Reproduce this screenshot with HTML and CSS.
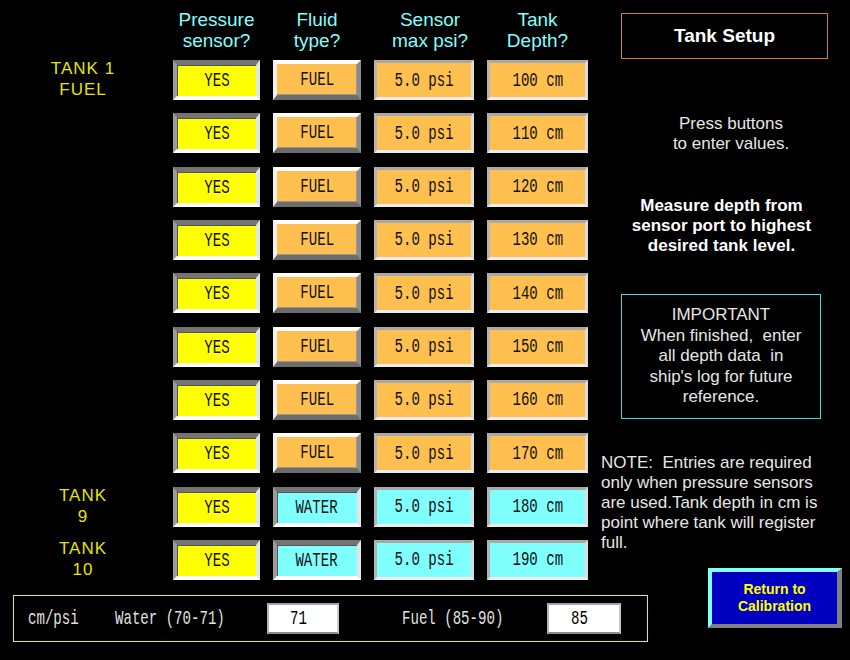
FILE: index.html
```html
<!DOCTYPE html>
<html lang="en">
<head>
    <meta charset="UTF-8">
    <title>Tank Setup</title>
    <link rel="stylesheet" href="styles.css">
</head>
<body>

    <div class="screen">

        <!-- Tank table -->
        <div class="tanks">
            <div class="heads">
                <div></div>
                <div>Pressure<br>sensor?</div>
                <div>Fluid<br>type?</div>
                <div class="head-psi">Sensor<br>max psi?</div>
                <div>Tank<br>Depth?</div>
            </div>

            <div class="rows">
                <div class="tank-name">TANK 1<br>FUEL</div>
                <div class="key sunk yes"><span class="lcd">YES</span></div>
                <div class="key raised fuel"><span class="lcd">FUEL</span></div>
                <div class="key flat fuel"><span class="lcd">5.0 psi</span></div>
                <div class="key flat fuel"><span class="lcd">100 cm</span></div>

                <div></div>
                <div class="key sunk yes"><span class="lcd">YES</span></div>
                <div class="key raised fuel"><span class="lcd">FUEL</span></div>
                <div class="key flat fuel"><span class="lcd">5.0 psi</span></div>
                <div class="key flat fuel"><span class="lcd">110 cm</span></div>

                <div></div>
                <div class="key sunk yes"><span class="lcd">YES</span></div>
                <div class="key raised fuel"><span class="lcd">FUEL</span></div>
                <div class="key flat fuel"><span class="lcd">5.0 psi</span></div>
                <div class="key flat fuel"><span class="lcd">120 cm</span></div>

                <div></div>
                <div class="key sunk yes"><span class="lcd">YES</span></div>
                <div class="key raised fuel"><span class="lcd">FUEL</span></div>
                <div class="key flat fuel"><span class="lcd">5.0 psi</span></div>
                <div class="key flat fuel"><span class="lcd">130 cm</span></div>

                <div></div>
                <div class="key sunk yes"><span class="lcd">YES</span></div>
                <div class="key raised fuel"><span class="lcd">FUEL</span></div>
                <div class="key flat fuel"><span class="lcd">5.0 psi</span></div>
                <div class="key flat fuel"><span class="lcd">140 cm</span></div>

                <div></div>
                <div class="key sunk yes"><span class="lcd">YES</span></div>
                <div class="key raised fuel"><span class="lcd">FUEL</span></div>
                <div class="key flat fuel"><span class="lcd">5.0 psi</span></div>
                <div class="key flat fuel"><span class="lcd">150 cm</span></div>

                <div></div>
                <div class="key sunk yes"><span class="lcd">YES</span></div>
                <div class="key raised fuel"><span class="lcd">FUEL</span></div>
                <div class="key flat fuel"><span class="lcd">5.0 psi</span></div>
                <div class="key flat fuel"><span class="lcd">160 cm</span></div>

                <div></div>
                <div class="key sunk yes"><span class="lcd">YES</span></div>
                <div class="key raised fuel"><span class="lcd">FUEL</span></div>
                <div class="key flat fuel"><span class="lcd">5.0 psi</span></div>
                <div class="key flat fuel"><span class="lcd">170 cm</span></div>

                <div class="tank-name">TANK<br>9</div>
                <div class="key sunk yes"><span class="lcd">YES</span></div>
                <div class="key sunk water"><span class="lcd">WATER</span></div>
                <div class="key flat water"><span class="lcd">5.0 psi</span></div>
                <div class="key flat water"><span class="lcd">180 cm</span></div>

                <div class="tank-name">TANK<br>10</div>
                <div class="key sunk yes"><span class="lcd">YES</span></div>
                <div class="key sunk water"><span class="lcd">WATER</span></div>
                <div class="key flat water"><span class="lcd">5.0 psi</span></div>
                <div class="key flat water"><span class="lcd">190 cm</span></div>
            </div>
        </div>

        <!-- Instructions -->
        <div class="side">
            <div class="title">Tank Setup</div>
            <div class="hint">Press buttons<br>to enter values.</div>
            <div class="measure">Measure depth from<br>sensor port to highest<br>desired tank level.</div>
            <div class="important">
                IMPORTANT<br>
                When finished,&nbsp; enter<br>
                all depth data&nbsp; in<br>
                ship's log for future<br>
                reference.
            </div>
            <div class="note">
                NOTE:&nbsp; Entries are required<br>
                only when pressure sensors<br>
                are used.Tank depth in cm is<br>
                point where tank will register<br>
                full.
            </div>
        </div>

    </div>

    <!-- Calibration factors + return key -->
    <div class="footer">
        <div class="bar">
            <div><span class="lcd">cm/psi</span></div>
            <div><span class="lcd">Water (70-71)</span></div>
            <div class="field"><span class="lcd">71</span></div>
            <div class="fuel-label"><span class="lcd">Fuel (85-90)</span></div>
            <div class="field"><span class="lcd">85</span></div>
        </div>
        <div class="back">Return to<br>Calibration</div>
    </div>

</body>
</html>
```

FILE: styles.css
```css
body {
    margin: 0;
    width: 850px;
    height: 660px;
    overflow: hidden;
    background-color: #000;
    font-family: "Liberation Sans", Arial, sans-serif;
}
.screen {
    display: flex;
    height: 580px;
}

/* Tank table */
.tanks {
    width: 600px;
}
.heads,
.rows {
    display: grid;
    grid-template-columns: 160px 87px 88px 100px 101px;
    column-gap: 13px;
}
.heads {
    height: 60px;
    box-sizing: border-box;
    padding-top: 9px;
    color: #80ffff;
    font-size: 19px;
    line-height: 21px;
    text-align: center;
    white-space: nowrap;
}
.head-psi {
    padding-left: 12px;
}
.rows {
    grid-auto-rows: 40px;
    row-gap: 13.33px;
}
.tank-name {
    margin-top: -2px;
    padding-left: 6px;
    color: #e4e400;
    font-size: 17px;
    line-height: 21px;
    letter-spacing: 1px;
    text-align: center;
    white-space: nowrap;
}

/* Narrow fixed-width panel lettering */
.lcd {
    display: inline-block;
    font-family: "Liberation Mono", "DejaVu Sans Mono", monospace;
    font-size: 21px;
    white-space: pre;
    transform: scaleX(0.67);
}

.key {
    display: flex;
    align-items: center;
    justify-content: center;
    box-sizing: border-box;
    border-style: solid;
    color: #111;
}
.key.sunk {
    border-width: 5px 4px 4px 4px;
    border-color: #747474 #e4e4e4 #fff #9c9c9c;
    box-shadow: inset 1px 1px 0 #555;
}
.key.raised {
    border-width: 4px 4px 5px 4px;
    border-color: #fff #8a8a8a #6c6c6c #f0f0f0;
    box-shadow: inset -1px -1px 0 #999;
}
.key.flat {
    border-width: 3px;
    border-color: #a8a8a8 #dcdcdc #ececec #b4b4b4;
}
.yes {
    background-color: #ffff00;
}
.fuel {
    background-color: #ffc050;
}
.water {
    background-color: #80ffff;
}

/* Instructions */
.side {
    width: 250px;
    box-sizing: border-box;
    padding-left: 1px;
    color: #e6e6e6;
    font-size: 17px;
}
.title {
    margin: 13px 0 0 20px;
    width: 207px;
    height: 46px;
    box-sizing: border-box;
    border: 1px solid #d98030;
    display: flex;
    align-items: center;
    justify-content: center;
    color: #fff;
    font-size: 19px;
    font-weight: bold;
}
.hint {
    margin: 55px 0 0 20px;
    width: 220px;
    line-height: 20px;
    text-align: center;
}
.measure {
    margin-top: 42px;
    width: 241px;
    color: #fff;
    font-weight: bold;
    line-height: 20px;
    text-align: center;
}
.important {
    margin: 38px 0 0 20px;
    width: 200px;
    height: 125px;
    box-sizing: border-box;
    padding-top: 10px;
    border: 1px solid #40d8d8;
    line-height: 20.5px;
    text-align: center;
}
.note {
    margin-top: 34px;
    line-height: 20px;
    white-space: nowrap;
}

/* Footer */
.footer {
    display: flex;
    align-items: flex-start;
}
.bar {
    margin: 15px 0 0 13px;
    width: 635px;
    height: 47px;
    box-sizing: border-box;
    padding-left: 14px;
    border: 1px solid #f0f000;
    display: grid;
    grid-template-columns: 87px 152px 72px 63px 145px 74px;
    align-items: center;
    color: #e0e0e0;
}
.bar > div > .lcd {
    transform-origin: left center;
}
.bar .fuel-label {
    grid-column: 5;
}
.field {
    height: 31px;
    box-sizing: border-box;
    border: 2px solid;
    border-color: #a4a4a4 #c8c8c8 #8c8c8c #b4b4b4;
    background-color: #fff;
    display: flex;
    align-items: center;
    justify-content: center;
    color: #000;
}
.back {
    margin: -12px 0 0 60px;
    width: 134px;
    height: 60px;
    box-sizing: border-box;
    border-style: solid;
    border-width: 4px 5px 4px 4px;
    border-color: #80ffff #808080 #808080 #80ffff;
    background-color: #0000c0;
    display: flex;
    align-items: center;
    justify-content: center;
    color: #ffff00;
    font-size: 14px;
    font-weight: bold;
    line-height: 17px;
    text-align: center;
    cursor: pointer;
}
```
